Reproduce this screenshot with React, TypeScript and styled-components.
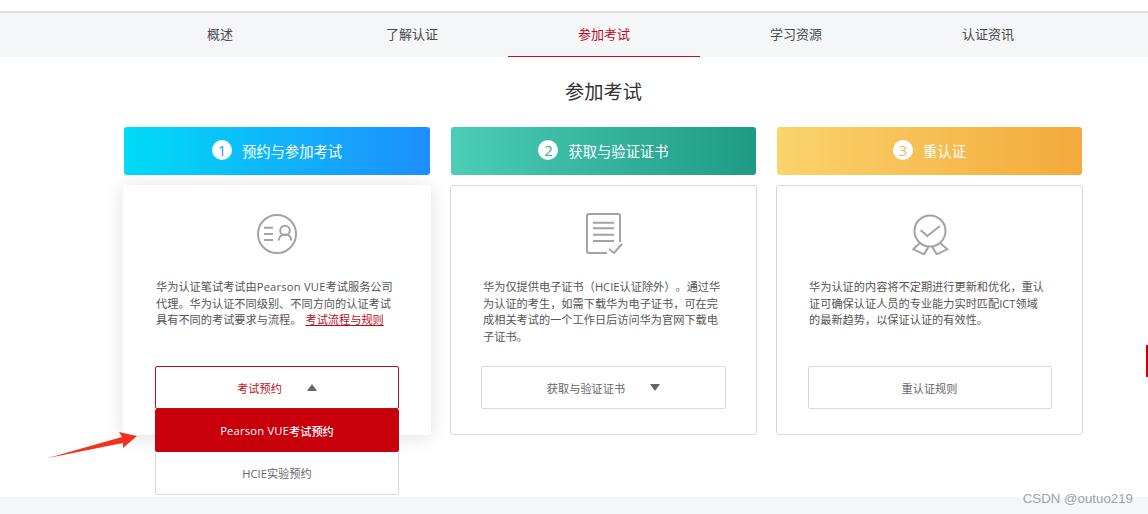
import React from "react";
import styled, { createGlobalStyle } from "styled-components";

const GlobalStyle = createGlobalStyle`
  html, body {
    margin: 0;
    padding: 0;
    background: #fff;
    overflow: hidden;
  }
  body {
    font-family: "Open Sans", "Noto Sans CJK SC", sans-serif;
    color: #555;
    text-spacing-trim: space-all;
  }
`;

const Page = styled.div`
  position: relative;
  width: 1148px;
  height: 514px;
  overflow: hidden;
`;

const Nav = styled.nav`
  display: flex;
  height: 44px;
  margin-top: 11px;
  padding-left: 124px;
  border-top: 2px solid #dddddd;
  background: #f5f6f8;
`;

const NavItem = styled.a<{ $active?: boolean }>`
  display: flex;
  align-items: center;
  justify-content: center;
  box-sizing: border-box;
  width: 192px;
  padding-bottom: 2px;
  font-size: 13px;
  color: ${(p) => (p.$active ? "#b8101c" : "#4a4a4a")};
  border-bottom: 1px solid ${(p) => (p.$active ? "#b8101c" : "transparent")};
`;

const Main = styled.main`
  box-sizing: border-box;
  height: 440px;
  padding: 21px 0 0 124px;
`;

const Title = styled.h2`
  width: 959px;
  margin: 0 0 21px;
  font-size: 19.25px;
  font-weight: 400;
  line-height: 28px;
  text-align: center;
  color: #333;
`;

const Columns = styled.div`
  display: grid;
  grid-template-columns: 306px 305px 305px;
  column-gap: 21px;
`;

const Column = styled.div`
  display: flex;
  flex-direction: column;
  gap: 10px;
`;

const StepHeader = styled.div<{ $from: string; $to: string }>`
  display: flex;
  align-items: center;
  justify-content: center;
  gap: 10px;
  box-sizing: border-box;
  height: 48px;
  padding-bottom: 2px;
  border-radius: 3px;
  font-size: 14.3px;
  color: #fff;
  background: linear-gradient(90deg, ${(p) => p.$from}, ${(p) => p.$to});
`;

const StepNumber = styled.span<{ $color: string }>`
  display: flex;
  align-items: center;
  justify-content: center;
  width: 20px;
  height: 20px;
  border-radius: 50%;
  font-size: 15px;
  background: #fff;
  color: ${(p) => p.$color};
`;

const Card = styled.div<{ $raised?: boolean }>`
  display: flex;
  flex-direction: column;
  align-items: center;
  box-sizing: border-box;
  height: 250px;
  margin: 0 -1px;
  padding: 27px 32px 25px;
  border-radius: 3px;
  background: #fff;
  border: 1px solid ${(p) => (p.$raised ? "transparent" : "#d9d9d9")};
  box-shadow: ${(p) => (p.$raised ? "0 2px 20px rgba(0, 0, 0, 0.13)" : "none")};
`;

const IconSlot = styled.div`
  display: flex;
  justify-content: center;
  height: 42px;
  svg {
    display: block;
  }
`;

const Description = styled.p`
  align-self: stretch;
  margin: 24px 0 0;
  font-size: 11.2px;
  line-height: 16.5px;
  white-space: nowrap;
  color: #555;
`;

const Latin = styled.span`
  letter-spacing: 0.2px;
`;

const RuleLink = styled.a`
  margin-left: 4px;
  color: #b8101c;
  text-decoration: underline;
`;

const ButtonWrap = styled.div<{ $wide?: boolean }>`
  position: relative;
  flex-shrink: 0;
  width: ${(p) => (p.$wide ? "245px" : "244px")};
  margin-top: auto;
`;

const ActionButton = styled.div<{ $open?: boolean }>`
  display: flex;
  align-items: center;
  justify-content: center;
  gap: 25px;
  box-sizing: border-box;
  height: 43px;
  border-radius: 2px;
  font-size: 11.2px;
  color: ${(p) => (p.$open ? "#b8101c" : "#666")};
  border: 1px solid ${(p) => (p.$open ? "#b8101c" : "#d9d9d9")};
  background: #fff;
`;

const Triangle = styled.i<{ $up?: boolean }>`
  width: 0;
  height: 0;
  border-left: 5px solid transparent;
  border-right: 5px solid transparent;
  ${(p) =>
    p.$up ? "border-bottom: 7px solid #666;" : "border-top: 7px solid #666;"}
`;

const Menu = styled.div`
  position: absolute;
  top: 100%;
  left: 0;
  right: 0;
  z-index: 2;
  background: #fff;
`;

const MenuItem = styled.div<{ $primary?: boolean }>`
  display: flex;
  align-items: center;
  justify-content: center;
  box-sizing: border-box;
  height: 43px;
  border-radius: 2px;
  font-size: 11.2px;
  ${(p) =>
    p.$primary
      ? "background: #c7000b; color: #fff; font-weight: 500;"
      : "background: #fff; color: #666; border: 1px solid #d9d9d9; border-top: none;"}
`;

const FooterBand = styled.div`
  height: 17px;
  background: #f5f6f8;
`;

const Watermark = styled.span`
  position: absolute;
  right: 15px;
  top: 491px;
  font-family: "Liberation Sans", sans-serif;
  font-size: 13.3px;
  line-height: 16px;
  color: #a3a3a3;
`;

const SideMark = styled.div`
  position: absolute;
  right: 0;
  top: 345px;
  width: 2px;
  height: 32px;
  background: #c7000b;
`;

const ArrowMark = styled.svg`
  position: absolute;
  left: 45px;
  top: 428px;
  z-index: 3;
`;

const PersonIcon = () => (
  <svg width="40" height="42" viewBox="0 -1 40 42" fill="none" stroke="#a3a3a3" strokeWidth="2">
    <circle cx="20" cy="20" r="19" />
    <path d="M7 13.7h9M7 20h9M7 26h9" />
    <circle cx="28" cy="16.5" r="4.8" />
    <path d="M21.7 26.5c.5-4.5 3-6 6.3-6s5.8 1.5 6.5 6" />
  </svg>
);

const DocIcon = () => (
  <svg width="40" height="42" viewBox="0 0 40 42" fill="none" stroke="#a3a3a3" strokeWidth="2">
    <path d="M23 40H5a2 2 0 0 1-2-2V3a2 2 0 0 1 2-2h29a2 2 0 0 1 2 2v26" />
    <path d="M9 9.7h21M9 15.3h21M9 21.7h21M9 28h21" />
    <path d="M25 36l5 4 8-9" />
  </svg>
);

const BadgeIcon = () => (
  <svg width="40" height="42" viewBox="0 0 40 42" fill="none" stroke="#a3a3a3" strokeWidth="2">
    <circle cx="20" cy="18" r="15.5" />
    <path d="M10.7 17.3l6.6 5.7 12.7-10" />
    <path d="M10 29.7L3.3 36.3 14 41.3 18.3 34" />
    <path d="M30 29.7l7.3 6.6-10.6 5L22.3 34" />
  </svg>
);

const App = () => {
  return (
    <Page>
      <GlobalStyle />
      <Nav>
        <NavItem>概述</NavItem>
        <NavItem>了解认证</NavItem>
        <NavItem $active>参加考试</NavItem>
        <NavItem>学习资源</NavItem>
        <NavItem>认证资讯</NavItem>
      </Nav>
      <Main>
        <Title>参加考试</Title>
        <Columns>
          <Column>
            <StepHeader $from="#00dcf7" $to="#1e8eff">
              <StepNumber $color="#3f8ff5">1</StepNumber>
              预约与参加考试
            </StepHeader>
            <Card $raised>
              <IconSlot>
                <PersonIcon />
              </IconSlot>
              <Description>
                华为认证笔试考试由<Latin>Pearson VUE</Latin>考试服务公司
                <br />
                代理。华为认证不同级别、不同方向的认证考试
                <br />
                具有不同的考试要求与流程。
                <RuleLink>考试流程与规则</RuleLink>
              </Description>
              <ButtonWrap>
                <ActionButton $open>
                  考试预约
                  <Triangle $up />
                </ActionButton>
                <Menu>
                  <MenuItem $primary>
                    <Latin>Pearson VUE</Latin>考试预约
                  </MenuItem>
                  <MenuItem>HCIE实验预约</MenuItem>
                </Menu>
              </ButtonWrap>
            </Card>
          </Column>
          <Column>
            <StepHeader $from="#4bcdb7" $to="#1f9b84">
              <StepNumber $color="#3aa893">2</StepNumber>
              获取与验证证书
            </StepHeader>
            <Card>
              <IconSlot>
                <DocIcon />
              </IconSlot>
              <Description>
                华为仅提供电子证书（HCIE认证除外）。通过华
                <br />
                为认证的考生，如需下载华为电子证书，可在完
                <br />
                成相关考试的一个工作日后访问华为官网下载电
                <br />
                子证书。
              </Description>
              <ButtonWrap $wide>
                <ActionButton>
                  获取与验证证书
                  <Triangle />
                </ActionButton>
              </ButtonWrap>
            </Card>
          </Column>
          <Column>
            <StepHeader $from="#fad46c" $to="#f4a93b">
              <StepNumber $color="#f2b765">3</StepNumber>
              重认证
            </StepHeader>
            <Card>
              <IconSlot>
                <BadgeIcon />
              </IconSlot>
              <Description>
                华为认证的内容将不定期进行更新和优化，重认
                <br />
                证可确保认证人员的专业能力实时匹配ICT领域
                <br />
                的最新趋势，以保证认证的有效性。
              </Description>
              <ButtonWrap>
                <ActionButton>重认证规则</ActionButton>
              </ButtonWrap>
            </Card>
          </Column>
        </Columns>
      </Main>
      <FooterBand />
      <Watermark>CSDN @outuo219</Watermark>
      <SideMark />
      <ArrowMark width="96" height="32" viewBox="45 428 96 32">
        <polygon points="48,458 122,437 119,432 137,436 123,448 123,443" fill="#f5301e" />
      </ArrowMark>
    </Page>
  );
};

export default App;
